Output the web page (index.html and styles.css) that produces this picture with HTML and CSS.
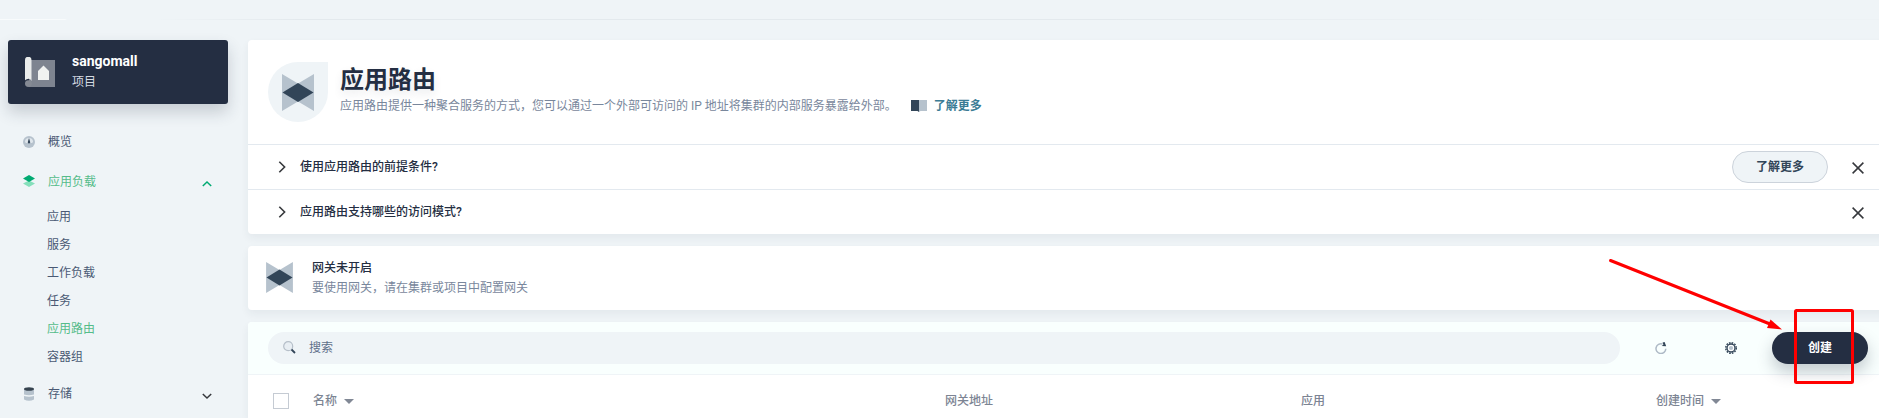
FILE: index.html
```html
<!DOCTYPE html>
<html lang="zh-CN">
<head>
<meta charset="utf-8">
<title>应用路由</title>
<link rel="stylesheet" href="styles.css">
</head>
<body>
<svg width="0" height="0" class="defs">
  <symbol id="route" viewBox="0 0 32 37"><path fill="#b6c2cd" d="M0 0L16 9.500L32 0V37L16 27.500L0 37z"/><path fill="#324558" d="M.5 18.500L16 9L31.500 18.500L16 28z"/></symbol>
  <symbol id="chev" viewBox="0 0 12 12"><path d="M1.800 8L6 4L10.200 8" fill="none" stroke="currentColor" stroke-width="1.500"/></symbol>
  <symbol id="chev-right" viewBox="0 0 12 12"><path d="M3.300 .8L8.600 6L3.300 11.200" fill="none" stroke="#36383c" stroke-width="1.600"/></symbol>
  <symbol id="cross" viewBox="0 0 12 12"><path d="M.6 .6L11.400 11.400M11.400 .6L.6 11.400" fill="none" stroke="#36383c" stroke-width="1.500"/></symbol>
</svg>
<div class="topline"></div>
<div class="page">
  <aside class="side">
    <div class="project">
      <svg class="project-icon" width="30" height="30" viewBox="0 0 30 30"><path fill="#7e8490" d="M4 3H30V30H4z"/><path fill="#eaeceb" d="M0 27V3A3 3 0 0 1 6.500 3V24A3.500 3.500 0 0 0 0 27z"/><circle cx="3.400" cy="26.600" r="3.400" fill="#858a94"/><path fill="#f0f2f1" d="M13 23V14L18.500 8.500L24 14V23z"/></svg>
      <div><div class="pname">sangomall</div><div class="ptype">项目</div></div>
    </div>
    <nav class="nav">
      <div class="item"><svg width="12" height="12" viewBox="0 0 12 12"><circle cx="6" cy="6" r="6" fill="#b6c2cd"/><path fill="#dfe6ec" d="M2 6A4 4 0 0 1 10 6L9 7H3z"/><path fill="#324558" d="M6 2L7.100 5.800A1.200 1.200 0 1 1 4.900 5.800z"/></svg><span>概览</span></div>
      <div class="item on"><svg class="layers" width="12" height="12" viewBox="0 0 12 12"><path fill="#85dfbb" d="M0 8.500L6 5.500L12 8.500L6 12z"/><path fill="#00aa72" d="M0 3.500L6 0L12 3.500L6 7z"/></svg><span>应用负载</span><svg class="arrow" width="12" height="12"><use href="#chev"/></svg></div>
      <div class="sub"><a>应用</a><a>服务</a><a>工作负载</a><a>任务</a><a class="on">应用路由</a><a>容器组</a></div>
      <div class="item"><svg width="12" height="14" viewBox="0 0 12 14"><path fill="#b6c2cd" d="M1 2H11V7.500Q6 9 1 7.500zM1 9Q6 10.500 11 9V12.500Q6 15 1 12.500z"/><ellipse cx="6" cy="2" rx="5" ry="1.800" fill="#36434f"/></svg><span>存储</span><svg class="arrow down" width="12" height="12"><use href="#chev"/></svg></div>
    </nav>
  </aside>
  <main class="main">
    <section class="card">
      <header class="banner">
        <div class="badge"><svg width="32" height="37"><use href="#route"/></svg></div>
        <div class="heading">
          <h1>应用路由</h1>
          <div class="desc"><span>应用路由提供一种聚合服务的方式，您可以通过一个外部可访问的 IP 地址将集群的内部服务暴露给外部。</span><svg width="16" height="12" viewBox="0 0 16 12"><path fill="#324558" d="M0 0H8V12L6.500 11H0z"/><path fill="#b6c2cd" d="M8 0H16V11H9.500L8 12z"/></svg><a>了解更多</a></div>
        </div>
      </header>
      <div class="faq"><svg width="12" height="12"><use href="#chev-right"/></svg><span>使用应用路由的前提条件?</span><button class="more">了解更多</button><svg class="close" width="12" height="12"><use href="#cross"/></svg></div>
      <div class="faq"><svg width="12" height="12"><use href="#chev-right"/></svg><span>应用路由支持哪些的访问模式?</span><svg class="close last" width="12" height="12"><use href="#cross"/></svg></div>
    </section>
    <section class="card gateway">
      <svg width="27" height="31"><use href="#route"/></svg>
      <div><div class="gname">网关未开启</div><div class="gdesc">要使用网关，请在集群或项目中配置网关</div></div>
    </section>
    <section class="card table">
      <div class="toolbar">
        <div class="search"><svg width="13" height="13" viewBox="0 0 13 13"><circle cx="5.200" cy="5.200" r="4.500" fill="#e8eef3" stroke="#b6bfc9" stroke-width="1.200"/><path d="M8.500 8.500L12 12" stroke="#324558" stroke-width="1.800"/></svg><span>搜索</span></div>
        <svg class="refresh" width="12" height="12" viewBox="0 0 12 12"><path d="M10.800 6.800A4.900 4.900 0 1 1 7.500 2" fill="none" stroke="#aebac6" stroke-width="1.500"/><path fill="#324558" d="M7.600 .6L9.600 0L11.200 4.200L6.600 4L8.400 2.800z"/></svg>
        <svg class="gear" width="12" height="12" viewBox="0 0 12 12"><circle cx="6" cy="6" r="5.300" fill="none" stroke="#324558" stroke-width="1.400" stroke-dasharray="1.665 1.110"/><circle cx="6" cy="6" r="4" fill="#fff" stroke="#324558" stroke-width="1.400"/><circle cx="6" cy="6" r="2.100" fill="#b6c2cd"/></svg>
        <button class="create">创建</button>
      </div>
      <div class="thead"><i class="check"></i><span>名称<i class="caret"></i></span><span>网关地址</span><span>应用</span><span>创建时间<i class="caret"></i></span></div>
    </section>
  </main>
</div>
<svg class="marker" width="1879" height="418" viewBox="0 0 1879 418"><path d="M1610.500 260.500L1770 324" stroke="#f00" stroke-width="3" stroke-linecap="round"/><path fill="#f00" d="M1782 329.500L1767 328L1770.500 319.500z"/><rect x="1795.500" y="310.500" width="57" height="72" rx="1" fill="none" stroke="#f00" stroke-width="3"/></svg>
</body>
</html>
```
FILE: styles.css
```css
* { box-sizing: border-box; }
body { margin: 0; width: 1879px; height: 418px; overflow: hidden; position: relative; background: #eff4f7; color: #242e42; font: 12px/20px Roboto, "Noto Sans CJK SC", sans-serif; }
svg { display: block; flex: none; }
.defs { position: absolute; }
.topline { height: 1px; margin-top: 19px; background: linear-gradient(90deg, #f8fbfc 0, #f8fbfc 65px, #eff4f7 67px, #eff4f7 155px, #e3e9ed 300px, #e3e9ed 1100px, #edf2f5 1500px); }
.page { display: flex; padding: 20px 0 0 8px; }
.side { width: 220px; margin-right: 20px; flex: none; }
.project { display: flex; height: 64px; padding: 11px 17px; border-radius: 3px; background: #242e42; box-shadow: 0 8px 16px rgba(36,46,66,.2); color: #fff; }
.project-icon { margin: 6px 17px 0 0; }
.pname { font-size: 14px; font-weight: 700; line-height: 20px; }
.ptype { padding-top: 1px; color: #d5dae1; line-height: 20px; }
.nav { padding-top: 18px; color: #4a5974; }
.item { display: flex; align-items: center; height: 40px; padding: 0 15px; }
.item span { margin-left: 13px; }
.item .layers { margin-top: -2px; }
.item .arrow { margin-left: auto; margin-top: 4px; color: #36383c; }
.on { color: #55bc8a; }
.item.on .arrow { color: #00aa72; }
.down { transform: rotate(180deg); }
.sub { padding: 1px 0 3px 39px; }
.sub a { display: block; height: 28px; line-height: 28px; }
.main { flex: none; width: 1651px; }
.card { border-radius: 4px; background: #fff; box-shadow: 0 4px 8px rgba(36,46,66,.06); margin-bottom: 12px; }
.banner { display: flex; height: 104px; padding: 22px 20px 0; }
.badge { display: flex; align-items: center; justify-content: center; width: 60px; height: 60px; margin-right: 12px; border-radius: 50% 0 50% 50%; background: #eff4f7; }
h1 { margin: 2px 0 0; font-size: 24px; font-weight: 700; line-height: 32px; text-shadow: 0 4px 8px rgba(36,46,66,.1); }
.desc { display: flex; align-items: center; color: #79879c; line-height: 20px; }
.desc svg { margin: 0 7px 0 14px; }
.desc a { font-weight: 700; color: #3b7c95; }
.faq { display: flex; align-items: center; height: 45px; padding: 0 35px 0 28px; border-top: 1px solid #e3e9ef; font-weight: 500; }
.faq span { margin-left: 12px; }
button { width: 96px; height: 32px; padding: 0; border-radius: 16px; font: inherit; font-weight: 700; }
.more { margin-left: auto; margin-right: 24px; border: 1px solid #ccd3db; background: #eff4f7; color: #324558; }
.close { margin-top: 1px; }
.last { margin-left: auto; }
.gateway { display: flex; height: 64px; padding: 12px 18px; }
.gateway > svg { margin: 4px 19px 0 0; }
.gname { font-weight: 500; }
.gdesc { color: #79879c; }
.table { height: 96px; margin-bottom: 0; border-radius: 4px 4px 0 0; }
.toolbar { display: flex; align-items: center; height: 53px; padding: 0 0 1px 20px; border-bottom: 1px solid #eff4f7; background: #f9fffe; border-radius: 4px 4px 0 0; }
.search { display: flex; align-items: center; width: 1352px; height: 32px; padding-left: 15px; border-radius: 16px; background: #eff4f7; color: #5f708a; }
.search span { margin-left: 13px; }
.refresh { margin: 0 58px 0 35px; }
.gear { margin-right: 35px; }
.create { border: 0; background: #242e42; color: #fff; box-shadow: 0 8px 16px rgba(36,46,66,.25); }
.thead { display: grid; grid-template-columns: 40px 632px 356px 355px 200px; align-items: center; height: 43px; padding: 9px 0 0 25px; color: #7c8493; font-weight: 500; line-height: 34px; }
.check { width: 16px; height: 16px; border: 1px solid #c5cbd3; background: #fff; }
.caret { display: inline-block; margin-left: 7px; vertical-align: 1px; border: 5px solid transparent; border-top-color: #818895; border-bottom: 0; }
.marker { position: absolute; left: 0; top: 0; }
```
